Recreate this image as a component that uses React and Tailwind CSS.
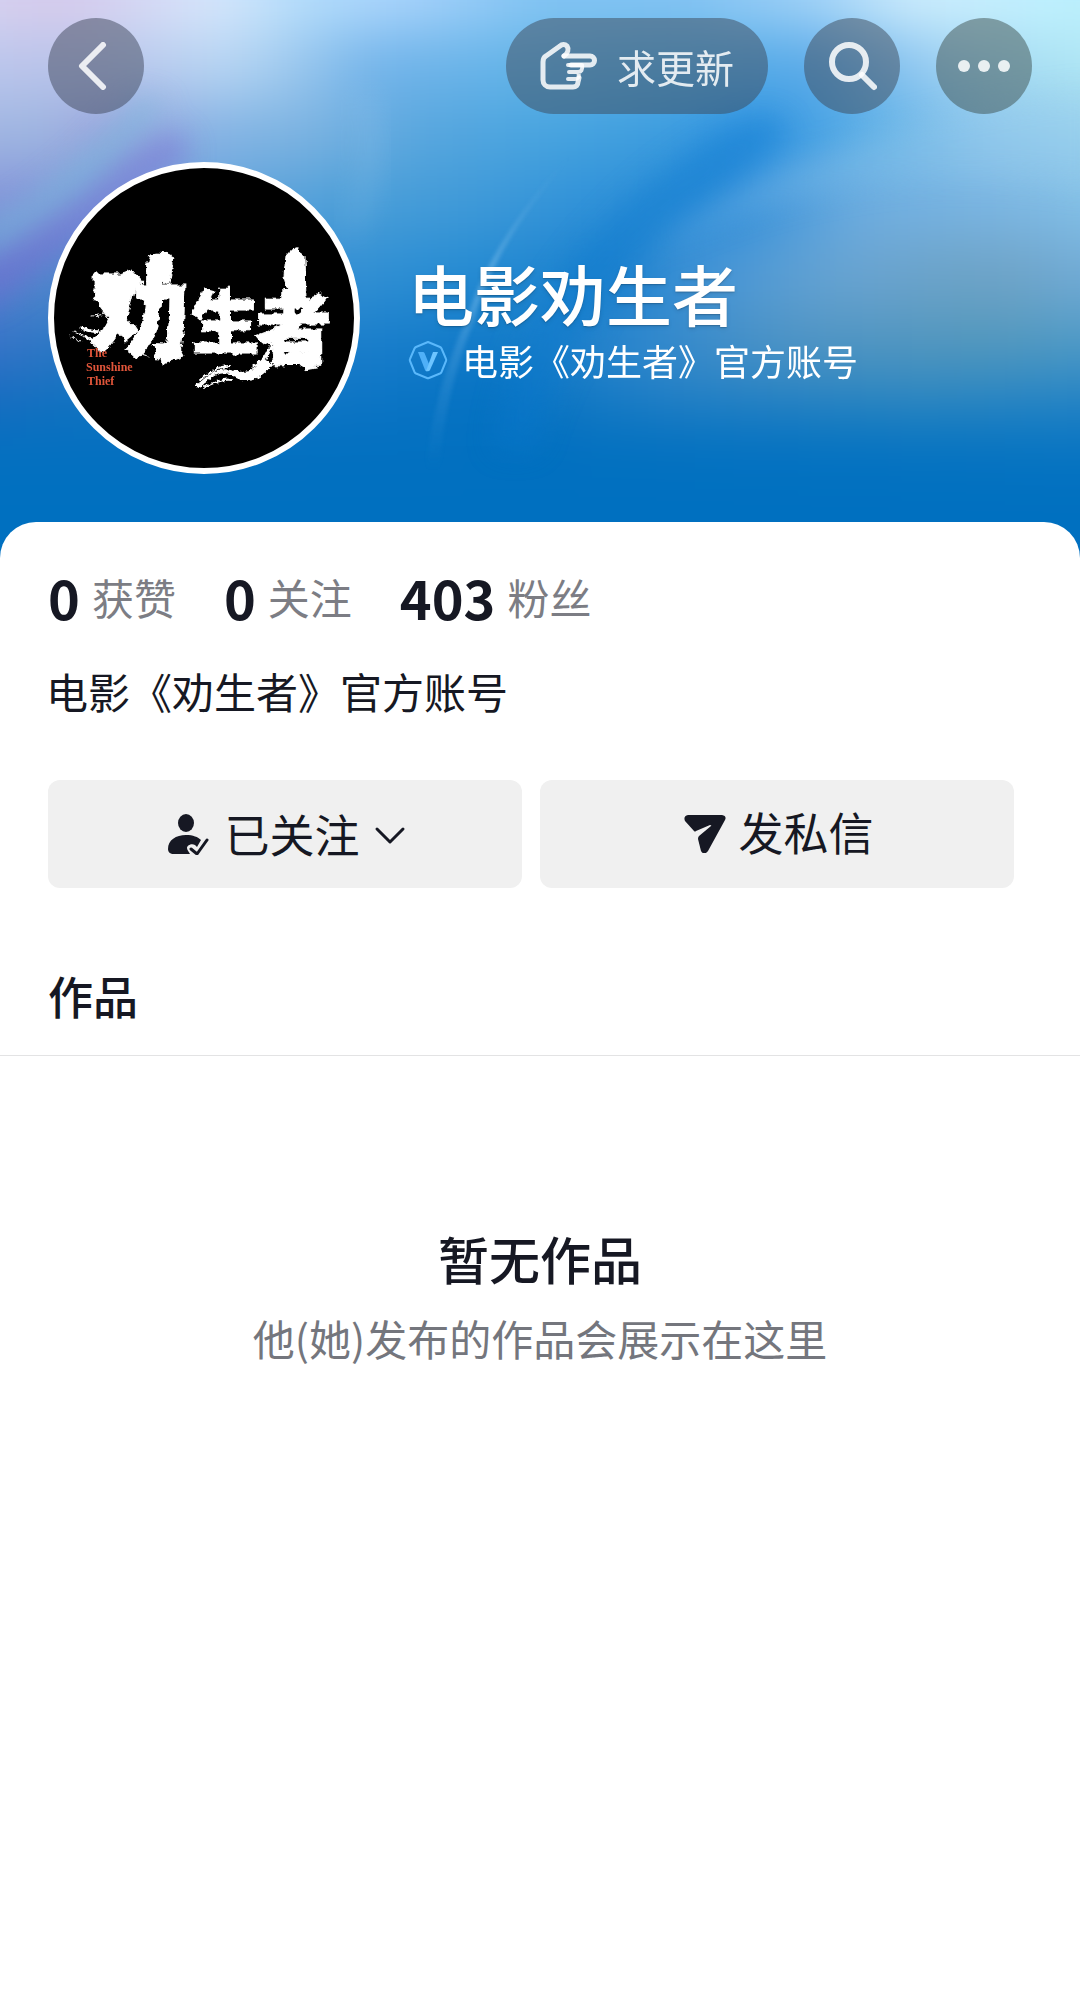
const stats = [
  { value: "0", label: "获赞" },
  { value: "0", label: "关注" },
  { value: "403", label: "粉丝" },
];

// Colour rows of the cover, top to bottom. Each row is a left-to-right gradient.
const coverRows = [
  { y: -60, h: 90, stops: ["0:#dad8f2", "12:#d9cbec", "24:#d9e9fd", "31:#b4defc", "39:#acd5fc", "50:#84c5f3", "62:#86c5f3", "72:#a4d4f8", "80:#d2effd", "90:#c2f2ff", "100:#b6f0fd"] },
  { y: 30, h: 70, stops: ["0:#bcc8ee", "12:#bac4ea", "25:#b8d6f3", "31:#98c6ed", "36:#74b4ea", "50:#62b4e8", "62:#58b0e8", "72:#58a8e8", "82:#9ccef2", "92:#aee4f3", "100:#b4ecf8"] },
  { y: 100, h: 70, stops: ["0:#a3b0e5", "9:#9db8e0", "16:#989fdc", "24:#84b4e4", "32:#7ab2e0", "40:#58a6de", "50:#48a4df", "60:#3c9cde", "67:#2b90e0", "76:#58aee6", "86:#8cc6ec", "100:#9cd8ee"] },
  { y: 170, h: 70, stops: ["0:#7ca0dc", "8:#8490d8", "20:#6ca4dc", "34:#4c9fd8", "46:#3c98d8", "56:#2c8fd8", "65:#2c8cd9", "76:#70aee0", "88:#7cb6e2", "100:#88c8ea"] },
  { y: 240, h: 70, stops: ["0:#6a7ad4", "10:#5088cc", "34:#3490d4", "44:#248bd2", "56:#1a80ce", "64:#4896d6", "74:#68a4d2", "86:#6ea2c4", "100:#74b0e0"] },
  { y: 310, h: 60, stops: ["0:#4472cc", "12:#2c78c4", "34:#1c7fcc", "46:#107ac8", "58:#3088ce", "70:#5094c4", "86:#5498bc", "100:#4c9ccc"] },
  { y: 370, h: 50, stops: ["0:#2066c0", "12:#1272c0", "34:#1076c6", "46:#0472c2", "60:#2480c6", "80:#3088c0", "100:#2484c8"] },
  { y: 420, h: 50, stops: ["0:#0670c0", "50:#0270c0", "100:#0a76c2"] },
  { y: 470, h: 130, stops: ["0:#0070c0", "100:#0070c0"] },
];

function Cover() {
  return (
    <svg
      className="absolute inset-0 h-full w-full"
      viewBox="0 0 1080 560"
      preserveAspectRatio="xMidYMin slice"
      aria-hidden="true"
    >
      <defs>
        {coverRows.map((row, i) => (
          <linearGradient key={i} id={`row${i}`}>
            {row.stops.map((s) => {
              const [offset, color] = s.split(":");
              return <stop key={offset} offset={`${offset}%`} stopColor={color} />;
            })}
          </linearGradient>
        ))}
        <filter id="soft" x="-10%" y="-20%" width="120%" height="140%" colorInterpolationFilters="sRGB">
          <feGaussianBlur stdDeviation="28" />
        </filter>
        <filter id="mid" x="-30%" y="-40%" width="160%" height="180%" colorInterpolationFilters="sRGB">
          <feGaussianBlur stdDeviation="14" />
        </filter>
        <filter id="thin" x="-30%" y="-30%" width="160%" height="160%" colorInterpolationFilters="sRGB">
          <feGaussianBlur stdDeviation="2" />
        </filter>
        <linearGradient id="wisp" x1="0" y1="0" x2="0" y2="1">
          <stop offset="0" stopColor="#9cd0f4" stopOpacity="0" />
          <stop offset="0.4" stopColor="#9cd0f4" stopOpacity="0.45" />
          <stop offset="0.6" stopColor="#7cbcec" stopOpacity="0.25" />
          <stop offset="1" stopColor="#6ab4ec" stopOpacity="0" />
        </linearGradient>
      </defs>
      <rect width="1080" height="560" fill="#0070c0" />
      <g filter="url(#soft)">
        {coverRows.map((row, i) => (
          <rect key={i} x="-80" y={row.y} width="1240" height={row.h + 1} fill={`url(#row${i})`} />
        ))}
      </g>

      {/* violet and cyan streaks on the left */}
      <g filter="url(#mid)">
        <path d="M-20 262 C60 220 110 160 180 130 L190 160 C120 190 60 270 -20 310Z" fill="#7868d0" opacity="0.45" />
        <path d="M-20 225 C50 190 90 150 140 95 L165 105 C120 170 60 220 -20 260Z" fill="#78bcdc" opacity="0.5" />
      </g>

      {/* deep fold and the pale sheet beside it */}
      <g filter="url(#mid)">
        <path d="M770 115 C700 130 600 210 545 300 C515 350 500 400 495 450 L535 450 C560 360 620 260 690 210 C740 175 770 150 790 130Z" fill="#0a78cc" opacity="0.4" />
        <path d="M1100 90 C900 110 740 170 660 250 C720 215 900 150 1100 190Z" fill="#9cccec" opacity="0.25" />
      </g>

      <path d="M355 90 C367 140 362 180 345 230 L352 240 C390 180 382 120 370 90Z" fill="#9cc8ec" opacity="0.25" filter="url(#mid)" />
      <path d="M575 150 C520 210 486 260 466 320 C444 370 430 420 426 470 L440 470 C442 420 456 365 474 320 C490 262 522 212 575 150Z" fill="url(#wisp)" filter="url(#thin)" />
    </svg>
  );
}

function Avatar() {
  return (
    <svg
      className="size-[312px] shrink-0 rounded-full border-6 border-white bg-black"
      viewBox="54 168 300 300"
      role="img"
      aria-label="劝生者 The Sunshine Thief"
    >
      <defs>
        <filter id="brush" x="-10%" y="-10%" width="120%" height="120%">
          <feTurbulence type="fractalNoise" baseFrequency="0.12" numOctaves="3" seed="4" result="n" />
          <feDisplacementMap in="SourceGraphic" in2="n" scale="7" xChannelSelector="R" yChannelSelector="G" />
        </filter>
        <filter id="dry" x="-10%" y="-20%" width="120%" height="140%">
          <feTurbulence type="fractalNoise" baseFrequency="0.3" numOctaves="2" seed="8" result="n" />
          <feDisplacementMap in="SourceGraphic" in2="n" scale="5" xChannelSelector="R" yChannelSelector="G" />
        </filter>
      </defs>
      <g
        fill="#fff"
        stroke="#fff"
        strokeWidth="1"
        fontFamily="'Noto Sans CJK SC', sans-serif"
        fontWeight="900"
        filter="url(#brush)"
      >
        <text x="91" y="350" fontSize="100">劝</text>
        <text x="190" y="348" fontSize="70">生</text>
        <text x="255" y="358" fontSize="78">者</text>
        {/* raised heads of the brush strokes and the thick blots */}
        <path d="M284 276 L286 256 Q294 244 305 255 L306 300 L290 300Z" />
        <path d="M149 262 L151 254 Q162 251 174 258 L169 284 L156 280Z" />
        <path d="M94 290 Q112 276 132 270 L142 282 L122 304 L98 306Z" />
        <path d="M160 346 L176 340 L184 356 L162 364Z" />
        <path d="M288 350 L314 352 L316 368 L304 370Z" />
      </g>
      <g fill="none" stroke="#fff" strokeLinecap="round" filter="url(#dry)">
        <path d="M268 352 C260 370 250 378 230 372 C214 368 208 380 198 386" strokeWidth="4" />
        <path d="M266 364 C258 378 248 380 236 374" strokeWidth="7" />
        <path d="M230 366 C216 366 208 374 200 380 M232 380 C222 378 212 384 204 387" strokeWidth="2" />
        <path d="M278 332 C270 350 266 360 254 366 M284 340 C278 356 270 368 260 374" strokeWidth="3" />
        <path d="M82 328 C94 334 100 330 112 334 M86 336 C94 344 104 340 110 338" strokeWidth="3" />
        <path d="M70 336 L82 342 M74 332 L92 340 M134 352 L148 356 M92 316 L108 314" strokeWidth="1" />
      </g>
      <g fill="#e0553a" fontFamily="'Liberation Serif', serif" fontWeight="700" fontSize="12">
        <text x="87" y="357">The</text>
        <text x="86" y="371">Sunshine</text>
        <text x="87" y="385">Thief</text>
      </g>
    </svg>
  );
}

function PointingHand() {
  return (
    <svg
      className="h-[50px] w-[57px]"
      viewBox="0 0 57 50"
      fill="none"
      stroke="currentColor"
      strokeWidth="5"
      strokeLinecap="round"
      strokeLinejoin="round"
      aria-hidden="true"
    >
      <path d="M24 15 H50 A4 4 0 0 1 50 24 H31" />
      <path d="M24 15 C28 12 29 8 27 5 C25 3 22 3 20 5 L6 15 C4 16 3 18 3 21 V39 C3 43 6 46 10 46 H33 C36 46 38 44 38 41 L39 37" />
      <path d="M28 24 H42 C43 29 41 31 38 31 H29 M38 31 C40 36 38 38 35 38 H28" strokeWidth="4" />
    </svg>
  );
}

function VerifiedBadge() {
  return (
    <svg className="size-10 shrink-0" viewBox="0 0 40 40" fill="none" aria-hidden="true">
      <path
        d="M20 2 L32 7 Q33 7.500 33.500 8.500 L38 19 Q38.500 20 38 21 L33.500 32 Q33 33 32 33.500 L21 38 Q20 38.500 19 38 L8 33.500 Q7 33 6.500 32 L2 21 Q1.500 20 2 19 L6.500 8.500 Q7 7.500 8 7Z"
        stroke="#5ab8fb"
        strokeWidth="2"
        strokeLinejoin="round"
      />
      <path d="M10 12 H15 Q16 12 16.500 13 L21 24 L19 31 Q18 32 17 30Z" fill="#4fb0f8" />
      <path d="M25 12 H30 L22 30 Q21 32 18 31Z" fill="#6cc4ff" />
    </svg>
  );
}

function FollowedIcon() {
  return (
    <svg className="size-[42px]" viewBox="0 -1 42 42" aria-hidden="true">
      <ellipse cx="18" cy="9" rx="8" ry="9" fill="currentColor" />
      <path
        d="M18 21 C25 21 30 23 33 26 L29 33 L27 31 C24 29 19 31 19 34 C19 36 21 38 22 40 H6 C2 40 0 38 0 35 C0 26 8 21 18 21Z"
        fill="currentColor"
      />
      <path d="M23 35 L29 40 L39 26" fill="none" stroke="currentColor" strokeWidth="3" strokeLinecap="round" strokeLinejoin="round" />
    </svg>
  );
}

export default function App() {
  return (
    <div className="min-h-screen bg-white font-['Noto_Sans_CJK_SC',sans-serif] text-[#161823]">
      <header className="relative bg-[#0070c0] pb-12">
        {/* taller than the header so that it shows behind the sheet's corners */}
        <div className="absolute inset-x-0 top-0 -bottom-9 overflow-hidden bg-[#0070c0]">
          <Cover />
        </div>

        <nav className="relative flex items-center gap-9 px-12 pt-[18px] text-white/85">
          <button aria-label="返回" className="flex size-24 items-center justify-center rounded-full bg-[#3e465a]/50">
            <svg className="size-12" viewBox="0 0 48 48" fill="none" stroke="currentColor" strokeWidth="6" strokeLinecap="round" strokeLinejoin="round" aria-hidden="true">
              <path d="M31 3 L10 24 L31 45" />
            </svg>
          </button>
          <button className="ml-auto flex h-24 items-center gap-5 rounded-full bg-[#3c4858]/50 px-[34px]">
            <PointingHand />
            <span className="text-[39px] leading-[60px]">求更新</span>
          </button>
          <button aria-label="搜索" className="flex size-24 items-center justify-center rounded-full bg-[#3c4858]/50">
            <svg className="size-[50px]" viewBox="0 0 50 50" fill="none" stroke="currentColor" strokeWidth="6" strokeLinecap="round" aria-hidden="true">
              <circle cx="22" cy="21" r="17" />
              <path d="M35 34 L47 46" />
            </svg>
          </button>
          <button aria-label="更多" className="flex size-24 items-center justify-center gap-2 rounded-full bg-[#3e504e]/50">
            <span className="size-3 rounded-full bg-current" />
            <span className="size-3 rounded-full bg-current" />
            <span className="size-3 rounded-full bg-current" />
          </button>
        </nav>

        <div className="relative mt-12 flex items-center gap-12 px-12 text-white">
          <Avatar />
          <div>
            <h1 className="text-[66px] leading-[80px] font-medium text-shadow-md">电影劝生者</h1>
            <div className="mt-1 flex items-center gap-[14px]">
              <VerifiedBadge />
              <p className="text-[36px] leading-[48px]">电影《劝生者》官方账号</p>
            </div>
          </div>
        </div>
      </header>

      <main className="relative rounded-t-[36px] bg-white pt-[45px]">
        <ul className="flex gap-12 px-12">
          {stats.map((s) => (
            <li key={s.label} className="flex items-center gap-3 leading-[60px]">
              <span className="text-[54px] font-bold">{s.value}</span>
              <span className="text-[42px] text-[#7c7d84]">{s.label}</span>
            </li>
          ))}
        </ul>

        <p className="mt-[34px] px-[46px] text-[42px] leading-[60px]">电影《劝生者》官方账号</p>

        <div className="mt-[59px] flex gap-[18px] pr-[66px] pl-12 text-[45px] leading-[60px]">
          <button className="flex h-[108px] flex-1 items-center justify-center gap-[14px] rounded-xl bg-[#f0f0f0] pl-1">
            <FollowedIcon />
            <span>已关注</span>
            <svg className="h-6 w-8" viewBox="0 0 32 24" fill="none" stroke="currentColor" strokeWidth="3" strokeLinecap="round" strokeLinejoin="round" aria-hidden="true">
              <path d="M3 7 L16 20 L29 7" />
            </svg>
          </button>
          <button className="flex h-[108px] flex-1 items-center justify-center gap-3 rounded-xl bg-[#f0f0f0] pb-1 pl-1">
            <svg className="size-[42px]" viewBox="0 -3 42 42" fill="currentColor" aria-hidden="true">
              <path d="M4 1 H38 Q43 2 41 6 L24 37 Q20 42 17 37 L14 25 Q14 23 15 22 L27 12 Q28 11 26 11 L12 17 Q11 18 10 17 L1 7 Q-1 2 4 1Z" />
            </svg>
            <span>发私信</span>
          </button>
        </div>

        <h2 className="border-b border-[#e3e3e4] px-12 pt-[78px] pb-[29px] text-[45px] leading-[60px] font-medium">作品</h2>

        <section className="mt-[166px] text-center">
          <h3 className="text-[51px] leading-[72px] font-medium">暂无作品</h3>
          <p className="mt-[14px] text-[42px] leading-[60px] text-[#74767d]">他(她)发布的作品会展示在这里</p>
        </section>
      </main>
    </div>
  );
}
